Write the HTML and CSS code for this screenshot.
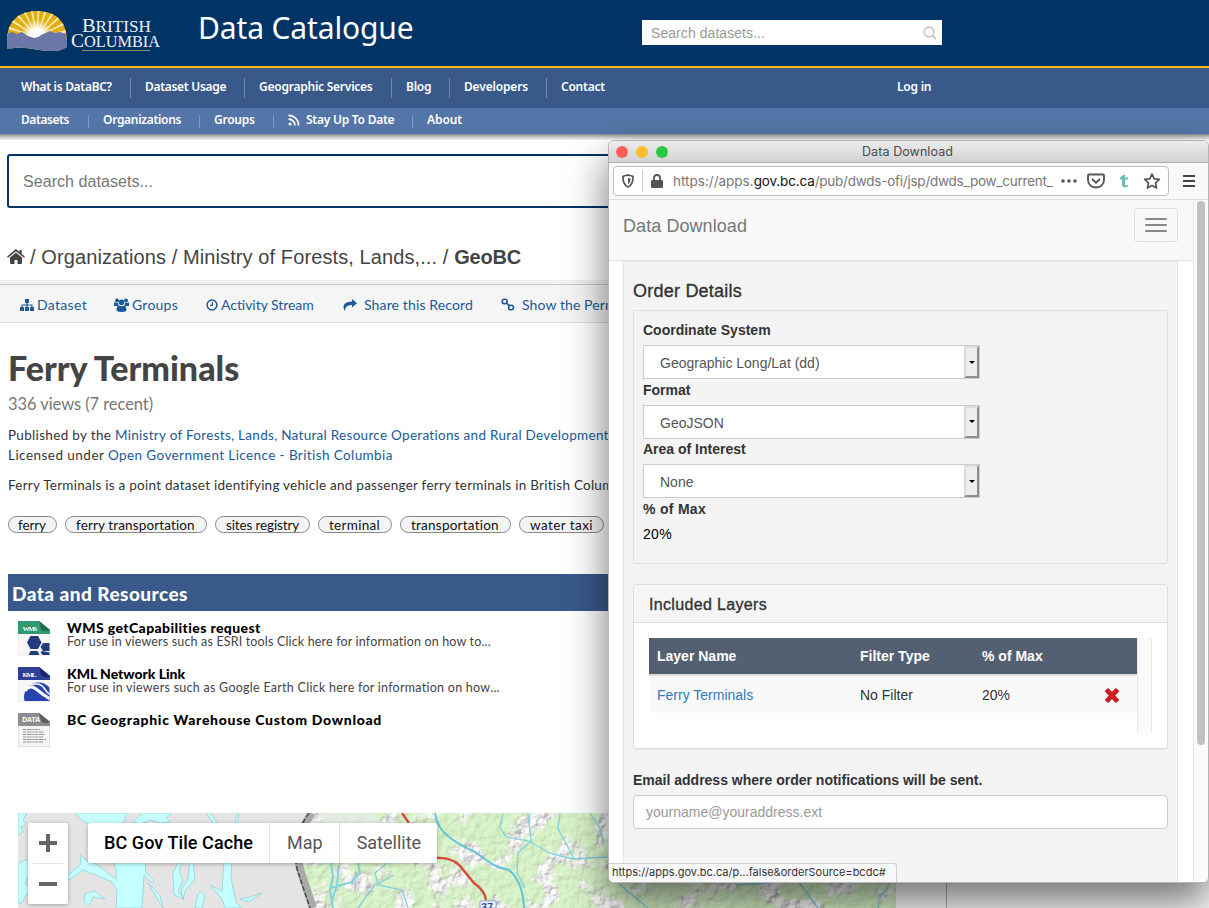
FILE: index.html
```html
<!DOCTYPE html>
<html lang="en">
<head>
<meta charset="utf-8">
<title>Data Catalogue</title>
<link rel="stylesheet" href="styles.css">
</head>
<body>
<header class="masthead">
  <svg class="logo" width="160" height="50" viewBox="0 0 160 50">
    <defs>
      <clipPath id="sun"><path d="M1 34C1 12 15 4 31 4s30 8 30 30v6q-6 4-14 4c-18 0-26-6-46-2z"/></clipPath>
      <radialGradient id="glow"><stop offset=".4" stop-color="#fff"/><stop offset="1" stop-color="#fff" stop-opacity="0"/></radialGradient>
    </defs>
    <g clip-path="url(#sun)">
      <rect width="62" height="46" fill="#e0ad12"/>
      <circle cx="31" cy="30" r="18" fill="none" stroke="#f8e7a0" stroke-width="36" stroke-dasharray="1.5 3.2"/>
      <circle cx="31" cy="29" r="17" fill="url(#glow)"/>
      <path d="M0 27l6-2 5 2 5-2 6 4 6 2 4-1 5-3 7-3 4 2 6-1 8 3v20H0z" fill="#6b77a8"/>
    </g>
    <g fill="#eef1f6" font-family="Liberation Serif, serif">
      <text x="76" y="25" font-size="19" textLength="69" lengthAdjust="spacingAndGlyphs">B<tspan font-size="16">RITISH</tspan></text>
      <text x="65" y="39.500" font-size="19" textLength="89" lengthAdjust="spacingAndGlyphs">C<tspan font-size="16">OLUMBIA</tspan></text>
    </g>
    <path d="M76 43.500h68" stroke="#8f8f63"/>
  </svg>
  <div class="site-title">Data Catalogue</div>
  <div class="head-search"><span>Search datasets...</span>
    <svg width="14" height="14" viewBox="0 0 14 14" fill="none" stroke="#c8c8c8" stroke-width="1.8"><circle cx="6" cy="6" r="4.8"/><path d="M9.5 9.5L13 13"/></svg>
  </div>
</header>
<nav class="nav-main">
  <a class="n1">What is DataBC?</a><a class="n2">Dataset Usage</a><a class="n3">Geographic Services</a><a class="n4">Blog</a><a class="n5">Developers</a><a class="n6">Contact</a><a class="login">Log in</a>
</nav>
<nav class="nav-sub">
  <a class="s1">Datasets</a><a class="s2">Organizations</a><a class="s3">Groups</a><a class="s4"><svg width="12" height="12" viewBox="0 0 12 12" fill="none" stroke="#fff" stroke-width="1.7"><circle cx="2" cy="10" r="1.5" fill="#fff" stroke="none"/><path d="M.5 5.2a6 6 0 0 1 6.3 6.3M.5 1.4A9.8 9.8 0 0 1 10.600 11.500"/></svg><span>Stay Up To Date</span></a><a class="s5">About</a>
</nav>
<div class="nav-shadow"></div>
<main class="page">
  <div class="big-search">Search datasets...</div>
  <div class="crumbs">
    <svg width="18" height="16" viewBox="0 0 18 16" fill="#444"><path d="M9 3.600L15 8.600V14q0 1-1 1h-3.500v-4h-3v4H4q-1 0-1-1V8.600z"/><path d="M9 0l3.500 3V1h2.200v3.800L18 7.700l-1 1.100L9 2.200 1 8.800 0 7.700 8 .7q1-.9 1-.7z"/></svg>
    <span>/ Organizations / Ministry of Forests, Lands,... /&nbsp;</span><b>GeoBC</b>
  </div>
  <div class="toolbar">
    <a class="b1"><svg width="14" height="12" viewBox="0 0 14 12" fill="#1a5a96"><path d="M5 0h4v4H7.600v1.500h4.900V8H14v4h-4V8h1.400V6.600H7.600V8H9v4H5V8h1.400V6.600H2.600V8H4v4H0V8h1.500V5.500h4.900V4H5z"/></svg><span>Dataset</span></a>
    <a class="b2"><svg width="15" height="14" viewBox="0 0 15 14" fill="#1a5a96"><circle cx="3" cy="2.500" r="2"/><circle cx="12" cy="2.500" r="2"/><circle cx="7.500" cy="4.300" r="2.800"/><path d="M0 8V5q0-1 1-.5 2 1 3 .3Q4 7 5 8zM15 8V5q0-1-1-.5-2 1-3 .3Q11 7 10 8zM3 13q-1-1 0-4 .5-1.500 2-1.500 2.500 1.500 5 0 1.500 0 2 1.500 1 3 0 4-1 1-4.500 1T3 13z"/></svg><span>Groups</span></a>
    <a class="b3"><svg width="12" height="12" viewBox="0 0 12 12" fill="none" stroke="#1a5a96" stroke-width="1.500"><circle cx="6" cy="6" r="4.900"/><path d="M6.400 3v3.400H4" stroke-width="1.200"/></svg><span>Activity Stream</span></a>
    <a class="b4"><svg width="14" height="12" viewBox="0 0 14 12" fill="#1a5a96"><path d="M9 0l5 4.200-5 4.300V6Q2.500 5.500 1.600 12-2.500 3 9 2.500z"/></svg><span>Share this Record</span></a>
    <a class="b5"><svg width="14" height="13" viewBox="0 0 14 13" fill="none" stroke="#1a5a96" stroke-width="1.600"><rect x="1.200" y="1.200" width="5" height="4.600" rx="2.200"/><rect x="7.500" y="7.200" width="5" height="4.600" rx="2.200"/><path d="M5 4.500l4 4"/></svg><span>Show the Permalink</span></a>
  </div>
  <h1>Ferry Terminals</h1>
  <div class="views">336 views (7 recent)</div>
  <div class="line publisher"><span>Published by the&nbsp;</span><a>Ministry of Forests, Lands, Natural Resource Operations and Rural Development</a></div>
  <div class="line licence"><span>Licensed under&nbsp;</span><a>Open Government Licence - British Columbia</a></div>
  <div class="line desc">Ferry Terminals is a point dataset identifying vehicle and passenger ferry terminals in British Columbia</div>
  <div class="tags"><span class="t1">ferry</span><span class="t2">ferry transportation</span><span class="t3">sites registry</span><span class="t4">terminal</span><span class="t5">transportation</span><span class="t6">water taxi</span></div>
  <h2>Data and Resources</h2>
  <div class="resource wms">
    <svg width="32" height="35" viewBox="0 0 32 35"><path d="M1 0h20l11 9v25q0 1-1 1H1q-1 0-1-1V1q0-1 1-1z" fill="#f7f7f7" stroke="#ddd" stroke-width=".6"/><path d="M1 0h20l11 9v4H0V1q0-1 1-1z" fill="#2f9a72"/><path d="M21 0l11 9q-6 3-9-1z" fill="#1d6f50"/><text class="glyph" x="4.500" y="9.500" textLength="15">WMS</text><path d="M12.500 15h7.500l3.500 6.500L20 28h-7.500L9 21.500zM25 22h6.500v8H25l-2.500-4zM10.500 34l2-4h7l2 4zM22.500 31l2-1 7 1.500V34h-7z" fill="#213a80"/></svg>
    <div><b>WMS getCapabilities request</b><p>For use in viewers such as ESRI tools Click here for information on how to...</p></div>
  </div>
  <div class="resource kml">
    <svg width="32" height="35" viewBox="0 0 32 35"><defs><clipPath id="kp"><path d="M0 13h31.500v21H0z"/></clipPath></defs><path d="M1 0h20l11 9v25q0 1-1 1H1q-1 0-1-1V1q0-1 1-1z" fill="#f7f7f7" stroke="#ddd" stroke-width=".6"/><path d="M1 0h20l11 9v4H0V1q0-1 1-1z" fill="#2c3f99"/><path d="M21 0l11 9q-6 3-9-1z" fill="#17246b"/><text class="glyph" x="4.500" y="9.500" textLength="14">KML</text><g clip-path="url(#kp)"><circle cx="20.500" cy="30" r="14.500" fill="#2744b0"/><path d="M7 24q5-7 11-2t14 10" stroke="#fff" stroke-width="3" fill="none"/><path d="M13 18q9-3 13 3t6 6" stroke="#fff" stroke-width="1.600" fill="none"/></g></svg>
    <div><b>KML Network Link</b><p>For use in viewers such as Google Earth Click here for information on how...</p></div>
  </div>
  <div class="resource data">
    <svg width="32" height="34" viewBox="0 0 32 34"><path d="M1 0h20l11 9v24q0 1-1 1H1q-1 0-1-1V1q0-1 1-1z" fill="#f5f5f5" stroke="#bbb" stroke-width=".7"/><path d="M1 0h20l11 9v4H0V1q0-1 1-1z" fill="#8d8d8d"/><path d="M21 0l11 9q-6 3-9-1z" fill="#5f5f5f"/><text class="glyph sans" x="4" y="9.300" textLength="18">DATA</text><path d="M5 16.500h17M5 19h21M5 21.500h22M5 24h20M5 26.500h23M5 29h20" stroke="#777" stroke-width=".8" stroke-dasharray="3 .7 5 .6 2 .5"/></svg>
    <div><b>BC Geographic Warehouse Custom Download</b></div>
  </div>
  <div class="map">
    <svg width="878" height="95" viewBox="0 0 878 95">
      <defs>
        <filter id="relief" x="0" y="0" width="100%" height="100%">
          <feTurbulence type="fractalNoise" baseFrequency=".1" numOctaves="4" seed="8" result="n"/>
          <feDiffuseLighting in="n" surfaceScale="6" lighting-color="#fff" result="l"><feDistantLight azimuth="225" elevation="52"/></feDiffuseLighting>
          <feColorMatrix in="l" values=".6 0 0 0 .41 0 .6 0 0 .4 0 0 .6 0 .41 0 0 0 1 0"/>
        </filter>
        <filter id="patch" x="0" y="0" width="100%" height="100%">
          <feTurbulence type="fractalNoise" baseFrequency=".035" numOctaves="4" seed="15"/>
          <feColorMatrix values="0 0 0 0 1 0 0 0 0 1 0 0 0 0 1 8 0 0 0 -4.100"/>
        </filter>
        <mask id="hills"><rect x="280" width="598" height="95" filter="url(#patch)"/></mask>
        <clipPath id="inland"><path d="M293 0h585v95H295l-7-30-5-20z"/></clipPath>
      </defs>
      <rect width="878" height="95" fill="#e4e4e4"/>
      <g clip-path="url(#inland)">
        <rect x="280" width="598" height="95" fill="#cdf1b7"/>
        <rect class="shade" x="280" width="598" height="95" filter="url(#relief)"/>
        <g mask="url(#hills)"><rect x="280" width="598" height="95" filter="url(#relief)"/></g>
        <ellipse cx="330" cy="10" rx="32" ry="14" fill="#e9ebee" opacity=".7"/>
      </g>
      <path d="M294 0q-11 15-13 32t3 30l11 33" stroke="#aaa" stroke-width="8" fill="none"/>
      <path d="M291 0q-11 15-13 32t3 30l11 33" stroke="#444" stroke-width="1.400" stroke-dasharray="5 2" fill="none"/>
      <g fill="#c6ffff" stroke="#86cfd4" stroke-width=".7">
        <path d="M0 0h9l-4 7 3 4-5 3 2 5-5 3zM56 0h53l-4 11 4 9q-2 10 5 20l14 10-1 8 9 10-2 2-8-8-2 33H98l1-18-5-8-14-6-15-6-11 8-8 4 3-6 14-12-1-9 7 6 9 3 9 7 11 8q2-10-5-22L77 14l-12-6zM0 50l8-3 8 2-6 7 2 5-5 9 7 6-6 6-4 8H0zM124 0h30l-6 5 5 4-12 1-8-3-11 4-7-2zM188 0h5l8 13-3 1zM206 46h8l-1 19 5 24 5 6h-16l-3-9-12-14 12 6zM180 81l3-3 4 5-3 12h-7zM217 8l3-8 1 1-2 11z"/>
        <path d="M155 60l5-10 5-3-4 10 4 11-5 10 6 8-10-4zM172 47h3l2 19-10 12-2 9-2-10 7-11zM130 70l12 12 3 13-6-10zM67 80l10-2 10 8-12-2-4 9-5-5zM244 80l-14 9-8-3 10-2z"/>
      </g>
      <g fill="none" stroke="#7fd2de" stroke-width="1.300">
        <path d="M417 0q2 15 14 24t26 15l14 10 9 5 11 3q14 12 15 38" stroke="#63c3da" stroke-width="2"/>
        <path d="M485 0l-3 14 6 10 23 4 20 12 24 6 35-2M510 0l3 28-13 12-1 20 8 15M542 0l-2 16 8 14 8 16M572 0l10 15 4 17M340 95l16-22 20-11M390 95l-6-18-24-5-3-12 14-12M700 60l20 12 60-4 20 27M600 70l30 25M860 95q0-12 8-18l6-12"/>
        <path d="M313 50l2 14-3 13 3 18M321 52l-2 20-5 15M312 75l22-6 8-9-2-10" stroke-width="2"/>
      </g>
      <path d="M384 0l7 10M418 45q16-1 24 8l14 17q11 8 12 17" stroke="#d9483b" stroke-width="2.400" fill="none"/>
      <path d="M462 88h16v7h-16z" fill="#fff" stroke="#8c9ae0"/><text x="463" y="98" class="route">37</text>
    </svg>
    <div class="zoomer"><svg width="40" height="80" viewBox="0 0 40 80"><path d="M11 20h18M20 11v18M11 61h18" stroke="#666" stroke-width="4"/><path d="M5 40.500h30" stroke="#e6e6e6"/></svg></div>
    <div class="maptypes"><b>BC Gov Tile Cache</b><span>Map</span><span>Satellite</span></div>
  </div>
</main>
<section class="window">
  <div class="titlebar"><i class="dot red"></i><i class="dot yellow"></i><i class="dot green"></i><span>Data Download</span></div>
  <div class="addressbar">
    <div class="url">
      <svg class="shield" width="14" height="14" viewBox="0 0 14 14" fill="none" stroke="#555" stroke-width="1.700"><path d="M7 1l5 1.300q.5 8-5 10.700Q1.500 10.300 2 2.300z"/><path d="M7 4v6.200q2.500-1.500 2.600-5.600z" fill="#555" stroke="none"/></svg>
      <i class="divider"></i>
      <svg class="lock" width="12" height="14" viewBox="0 0 12 14"><rect y="6" width="12" height="8" rx="1.300" fill="#555"/><path d="M3 7V4q0-3 3-3t3 3v3" fill="none" stroke="#555" stroke-width="1.800"/></svg>
      <div class="address"><span>https://apps.</span><strong>gov.bc.ca</strong><span class="path">/pub/dwds-ofi/jsp/dwds_pow_current_</span></div>
      <svg class="actions" width="102" height="18" viewBox="0 0 102 18"><g fill="#555"><circle cx="3" cy="9" r="1.800"/><circle cx="9" cy="9" r="1.800"/><circle cx="15" cy="9" r="1.800"/></g><path d="M29 2.500h14q1 0 1 1v4.500q-.5 7-8 7.500-7.500-.5-8-7.500V3.500q0-1 1-1zM32 7l4 3.800L40 7" fill="none" stroke="#555" stroke-width="1.900"/><path d="M62 3.500l3-1v3h3v2h-3v5q.3 1.500 3 .6v1.600q-6 2-6-2V7.500h-2V6z" fill="#6dbcb5"/><path d="M92 2l2.200 4.800 5.200.6-3.900 3.500 1.100 5.100L92 13.500 87.400 16l1.100-5.100-3.900-3.500 5.200-.6z" fill="none" stroke="#555" stroke-width="1.700" stroke-linejoin="round"/></svg>
    </div>
    <svg width="12" height="12" viewBox="0 0 12 12"><path d="M0 1h12M0 6h12M0 11h12" stroke="#444" stroke-width="1.900"/></svg>
  </div>
  <div class="viewport">
    <div class="content">
      <div class="navbar"><span>Data Download</span><div class="burger"><i></i><i></i><i></i></div></div>
      <div class="order">
        <h3>Order Details</h3>
        <div class="well">
          <div class="field"><label>Coordinate System</label><div class="select"><span>Geographic Long/Lat (dd)</span><i></i></div></div>
          <div class="field"><label>Format</label><div class="select"><span>GeoJSON</span><i></i></div></div>
          <div class="field"><label>Area of Interest</label><div class="select"><span>None</span><i></i></div></div>
          <label class="share">% of Max</label><div class="value">20%</div>
        </div>
        <div class="panel">
          <h4>Included Layers</h4>
          <div class="panel-body">
            <div class="table">
              <div class="row head"><span>Layer Name</span><span>Filter Type</span><span>% of Max</span></div>
              <div class="row"><a>Ferry Terminals</a><span>No Filter</span><span>20%</span><svg width="18" height="18" viewBox="0 0 18 18"><path d="M3.500 3.500l11 12M14.500 3.500l-11 12" stroke="#a80f12" stroke-width="4.800"/><path d="M4 4l10 11M14 4L4 15" stroke="#d81e1e" stroke-width="3.200"/></svg></div>
            </div>
            <div class="gutter"></div>
          </div>
        </div>
        <label class="email">Email address where order notifications will be sent.</label>
        <div class="input">yourname@youraddress.ext</div>
      </div>
    </div>
    <div class="track"><i></i></div>
  </div>
  <div class="status">https://apps.gov.bc.ca/p...false&amp;orderSource=bcdc#</div>
</section>
</body>
</html>
```
FILE: styles.css
```css
* { box-sizing: border-box; }
body { margin: 0; width: 1209px; height: 908px; overflow: hidden; position: relative; background: #fff; font-family: "Liberation Sans", Arial, sans-serif; font-size: 14px; white-space: nowrap; color: #444; }
svg { display: block; flex: none; }
i { font-style: normal; }

.masthead { height: 68px; background: #003366; border-bottom: 2px solid #fcba19; display: flex; align-items: flex-start; }
.logo { margin: 7px 0 0 6px; }
.site-title { margin: 5px 0 0 32px; width: 444px; font: 30px/46px "Noto Sans", sans-serif; letter-spacing: -.14px; color: #fff; }
.head-search { width: 300px; height: 25px; margin-top: 20px; padding: 1px 5px 0 9px; background: #fff; color: #999; letter-spacing: .064px; display: flex; align-items: center; justify-content: space-between; }
.nav-main, .nav-sub { display: flex; color: #fff; font: 600 12px/20px "Noto Sans", sans-serif; padding-left: 7px; letter-spacing: -.24px; }
.nav-main { height: 40px; background: #38598a; padding-top: 10px; align-items: flex-start; }
.nav-main a { height: 20px; line-height: 17px; padding-left: 14px; border-right: 1px solid #6f87ab; }
.nav-main .n6, .nav-main .login { border: 0; }
.n1 { width: 124px; letter-spacing: -.3px; } .n2 { width: 114px; letter-spacing: -.3px; } .n3 { width: 147px; } .n4 { width: 58px; } .n5 { width: 97px; letter-spacing: -.16px; } .n6 { width: 336px; }
.nav-sub { height: 26px; background: #5475a7; align-items: center; }
.nav-sub a { height: 13px; line-height: 10px; padding-left: 14px; border-right: 1px solid #7e98c0; display: flex; gap: 6px; }
.nav-sub .s5 { border: 0; letter-spacing: -.1px; }
.s1 { width: 82px; letter-spacing: -.43px; } .s2 { width: 111px; letter-spacing: -.31px; } .s3 { width: 74px; } .s4 { width: 139px; }
.s4 svg { margin-top: -1px; }
.nav-shadow { height: 6px; background: linear-gradient(#8c8c8c, #c4c4c4 50%, #f5f5f5); }

.page { width: 947px; height: 768px; border-right: 1px solid #b0b0b0; overflow: hidden; font-family: Lato, "Century Gothic", sans-serif; }
.big-search { margin: 14px 0 0 7px; height: 54px; width: 930px; border: 2px solid #003366; border-radius: 3px; padding-left: 14px; font: 16px/52px "Liberation Sans", Arial, sans-serif; letter-spacing: .057px; color: #777; }
.crumbs { height: 72px; padding: 26px 0 0 7px; display: flex; align-items: flex-start; font: 20px/46px "Liberation Sans", Arial, sans-serif; letter-spacing: .1px; }
.crumbs svg { margin: 15px 5px 0 0; }
.crumbs b { letter-spacing: -.159px; }
.toolbar { height: 43px; background: #f5f5f5; border-top: 4px solid #f0f0f0; border-bottom: 1px solid #dcdcdc; box-shadow: inset 0 1px #c8c8c8; display: flex; align-items: center; padding: 3px 0 0 20px; color: #1a5a96; font-size: 14px; }
.toolbar a { display: flex; align-items: center; gap: 3px; }
.b1 { width: 94px; letter-spacing: .324px; } .b2 { width: 92px; letter-spacing: .237px; } .b3 { width: 137px; letter-spacing: -.043px; } .b4 { width: 158px; letter-spacing: .132px; } .b5 { letter-spacing: .1px; }
.toolbar .b4, .toolbar .b5 { gap: 7px; }
h1 { margin: 23px 0 0 8px; font-size: 34px; line-height: 44px; font-weight: 900; color: #444; }
.views { margin-left: 8px; font-size: 16.500px; line-height: 28px; letter-spacing: -.067px; color: #777; }
.line { margin-left: 8px; font-size: 13.500px; line-height: 20px; color: #333; }
.views + .line { margin-top: 7px; }
.line a { color: #1a5a96; }
.publisher { letter-spacing: .323px; }
.publisher a { letter-spacing: .287px; }
.licence { letter-spacing: .468px; }
.licence a { letter-spacing: .4px; }
.desc { margin-top: 10px; letter-spacing: .256px; }
.tags { display: flex; gap: 8px; margin: 21px 0 0 8px; }
.tags span { height: 17px; border: 1px solid #888; border-radius: 9px; background: #f4f4f4; font-size: 13.500px; line-height: 16px; padding-left: 10px; color: #111; }
.tags .t1 { width: 49px; padding-left: 9px; letter-spacing: -.1px; } .t2 { width: 142px; letter-spacing: .13px; } .t3 { width: 95px; letter-spacing: -.13px; } .t4 { width: 74px; letter-spacing: .3px; } .t5 { width: 111px; letter-spacing: .23px; } .t6 { width: 85px; letter-spacing: .43px; }
h2 { margin: 41px 0 0 8px; height: 37px; padding-left: 4px; background: #38598a; color: #fff; font-size: 19px; line-height: 39px; font-weight: 900; letter-spacing: .46px; }
.resource { display: flex; gap: 17px; height: 46px; padding: 10px 0 0 18px; color: #000; font-size: 14px; line-height: 14px; }
.resource b { font-weight: 900; }
.resource p { margin: 0; font-size: 12.500px; line-height: 14px; color: #444; }
.wms b { letter-spacing: .397px; } .wms p { letter-spacing: .164px; }
.kml b { letter-spacing: -.041px; } .kml p { letter-spacing: .265px; }
.data b { letter-spacing: .697px; }
.glyph { font: bold 7px "Liberation Serif", serif; fill: #fff; letter-spacing: 0; }
.glyph.sans { font: bold 7px "Open Sans", sans-serif; }

.map { position: relative; margin: 64px 0 0 18px; width: 878px; height: 95px; overflow: hidden; font: 18px/40px Roboto, sans-serif; color: #565656; }
.shade { opacity: .28; }
.zoomer { position: absolute; left: 10px; top: 10px; width: 40px; height: 81px; background: #fff; border-radius: 2px; box-shadow: 0 1px 4px rgba(0,0,0,.3); }
.maptypes { position: absolute; left: 70px; top: 10px; height: 40px; display: flex; background: #fff; border-radius: 2px; box-shadow: 0 1px 4px rgba(0,0,0,.3); padding-left: 16px; }
.maptypes b { width: 165px; font-weight: 500; color: #000; letter-spacing: .078px; }
.maptypes span { padding: 0 16px 0 17px; border-left: 1px solid #e2e2e2; }
.route { font: bold 11px "Liberation Sans", sans-serif; fill: #2c49b5; }

.window { position: absolute; left: 608px; top: 140px; width: 601px; height: 743px; border: 1px solid #b5b5b5; border-radius: 6px; background: #fff; box-shadow: 0 20px 42px rgba(0,0,0,.55); overflow: hidden; }
.titlebar { height: 22px; background: linear-gradient(#ececec, #d3d3d3); border-bottom: 1px solid #b0b0b0; display: flex; align-items: center; gap: 8px; padding-left: 7px; font: 12.500px Inter, sans-serif; letter-spacing: .081px; color: #4a4a4a; }
.dot { width: 12px; height: 12px; border-radius: 50%; }
.red { background: #ff5f57; } .yellow { background: #febc2e; } .green { background: #28c840; }
.titlebar span { margin-left: 186px; }
.addressbar { height: 37px; background: #f9f9f9; border-bottom: 1px solid #ddd; display: flex; align-items: center; gap: 14px; padding-left: 4px; }
.url { width: 556px; height: 30px; background: #fff; border: 1px solid #bdbdbd; border-radius: 4px; display: flex; align-items: center; padding-left: 7px; }
.divider { width: 1px; height: 22px; margin-left: 7px; background: #d0d0d0; }
.lock { margin: 0 10px 0 8px; }
.address { width: 387px; font: 13.500px Inter, sans-serif; color: #777; }
.address strong { font-weight: 400; color: #111; letter-spacing: -.14px; }
.path { letter-spacing: -.24px; }
.viewport { display: flex; height: 683px; }
.content { width: 584px; background: #fff; }
.navbar { height: 61px; background: #f8f8f8; border-bottom: 1px solid #e4e4e4; display: flex; justify-content: space-between; padding: 8px 15px 0 14px; font-size: 18px; line-height: 36px; letter-spacing: .071px; color: #777; }
.burger { width: 44px; height: 34px; border: 1px solid #ddd; border-radius: 4px; display: flex; flex-direction: column; gap: 4px; padding: 9px 10px; }
.burger i { height: 2px; background: #888; border-radius: 1px; }
.order { margin: 0 15px 0 14px; height: 630px; border: 1px solid #e3e3e3; background: #f4f4f4; padding: 0 9px; color: #333; }
h3 { margin: 0; font-size: 18px; line-height: 20px; padding-top: 19px; height: 48px; font-weight: 400; letter-spacing: .228px; -webkit-text-stroke: .35px #333; }
.well { height: 254px; border: 1px solid #e0e0e0; border-radius: 3px; padding: 9px; }
label { display: block; font-weight: bold; line-height: 20px; }
.share { letter-spacing: .289px; }
.field { height: 59.600px; }
.select { margin-top: 5px; width: 337px; height: 34px; border: 1px solid #ccc; background: #fff; padding-left: 16px; line-height: 34px; color: #555; display: flex; justify-content: space-between; }
.select i { width: 15px; background: #eee; border: 2px solid; border-color: #ddd #8f8f8f #8f8f8f #ddd; display: flex; align-items: center; justify-content: center; }
.select i::after { content: ""; border: 3px solid transparent; border-top-color: #000; border-bottom: 0; }
.value { line-height: 20px; margin-top: 5px; color: #000; letter-spacing: .323px; }
.panel { margin-top: 20px; height: 165px; background: #fff; border: 1px solid #ddd; border-radius: 4px; box-shadow: 0 1px 1px rgba(0,0,0,.05); }
h4 { margin: 0; height: 38px; border-bottom: 1px solid #ddd; background: #f5f5f5; padding-left: 15px; font-size: 16px; font-weight: 400; line-height: 39px; letter-spacing: .335px; border-radius: 4px 4px 0 0; -webkit-text-stroke: .35px #333; }
.panel-body { display: flex; padding: 15px; }
.table { width: 488px; }
.row { display: grid; grid-template-columns: 203px 122px 121px 18px; align-items: center; height: 37px; padding-left: 8px; background: #f9f9f9; line-height: 20px; }
.row.head { height: 38px; background: #536072; color: #fff; font-weight: bold; border-bottom: 2px solid #ddd; }
.row a { color: #337ab7; }
.gutter { width: 15px; height: 95px; background: #fafafa; border: solid #e8e8e8; border-width: 0 1px; }
.email { margin-top: 21px; }
.input { margin-top: 5px; height: 34px; background: #fff; border: 1px solid #ccc; border-radius: 4px; padding-left: 12px; line-height: 33px; color: #999; }
.track { width: 15px; background: #fafafa; border-left: 1px solid #e5e5e5; padding: 1px 0 0 3px; }
.track i { display: block; width: 8px; height: 544px; border-radius: 4px; background: #c1c1c1; }
.status { position: absolute; left: 0; bottom: 0; width: 288px; height: 19px; background: #f8f8f8; border: solid #d0d0d0; border-width: 1px 1px 0 0; border-radius: 0 3px 0 0; padding-left: 3px; font: 11px/17px Inter, sans-serif; color: #333; }
```
